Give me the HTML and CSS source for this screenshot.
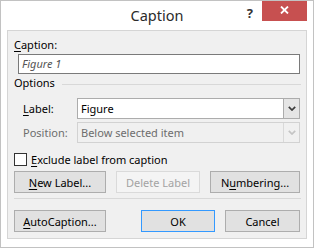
FILE: index.html
```html
<!DOCTYPE html>
<html lang="en">
<head>
  <meta charset="UTF-8">
  <title>Caption</title>
  <link rel="stylesheet" href="styles.css">
</head>
<body>
  <div class="window">
    <div class="titlebar">
      <span class="title">Caption</span>
      <span class="help">?</span>
      <span class="close">
        <svg width="9" height="8" viewBox="0 0 9 8">
          <path d="M1 0.5 L8 7.5 M8 0.5 L1 7.5" stroke="#fff" stroke-width="1.8" fill="none"/>
        </svg>
      </span>
    </div>
    <div class="client">
      <div class="caption-label"><u>C</u>aption:</div>
      <div class="textbox">Figure 1</div>
      <div class="group-title"><span>Options</span><span class="rule"></span></div>
      <div class="field">
        <span class="field-label"><u>L</u>abel:</span>
        <div class="combo">
          <span class="combo-text">Figure</span>
          <span class="combo-btn">
            <svg width="8" height="5" viewBox="0 0 8 5">
              <path d="M0.8 0.8 L4 4 L7.2 0.8" stroke="#3c3c3c" stroke-width="1.7" fill="none"/>
            </svg>
          </span>
        </div>
      </div>
      <div class="field disabled">
        <span class="field-label">Position:</span>
        <div class="combo">
          <span class="combo-text">Below selected item</span>
          <span class="combo-btn">
            <svg width="8" height="5" viewBox="0 0 8 5">
              <path d="M0.8 0.8 L4 4 L7.2 0.8" stroke="#c4c4c4" stroke-width="1.7" fill="none"/>
            </svg>
          </span>
        </div>
      </div>
      <label class="check">
        <span class="box"></span>
        <span><u>E</u>xclude label from caption</span>
      </label>
      <div class="buttons">
        <span class="btn wide"><u>N</u>ew Label...</span>
        <span class="btn mid off">Delete Label</span>
        <span class="btn last">N<u>u</u>mbering...</span>
      </div>
      <div class="separator"></div>
      <div class="buttons bottom">
        <span class="btn wide"><u>A</u>utoCaption...</span>
        <span class="btn small default">OK</span>
        <span class="btn small">Cancel</span>
      </div>
    </div>
  </div>
</body>
</html>
```

FILE: styles.css
```css
body {
  margin: 0;
  font-family: 'Noto Sans', sans-serif;
  font-size: 11px;
  color: #000;
}
u {
  text-decoration-thickness: 1px;
  text-underline-offset: 2px;
}
.window {
  width: 314px;
  height: 248px;
  box-sizing: border-box;
  border: 1px solid #c2c2c2;
  background: #fff;
  padding: 0 6px;
}
.titlebar {
  height: 29px;
  display: flex;
  align-items: flex-start;
  position: relative;
}
.title {
  position: absolute;
  left: 0;
  right: 0;
  top: 4px;
  text-align: center;
  font-size: 14.5px;
  color: #2b2b2b;
}
.help {
  margin-left: auto;
  margin-top: 3px;
  margin-right: 9px;
  font-weight: bold;
  font-size: 13px;
  color: #333;
  position: relative;
}
.close {
  width: 45px;
  height: 20px;
  background: #c75050;
  display: flex;
  align-items: center;
  justify-content: center;
  position: relative;
}
.close svg {
  margin-top: -2px;
}

/* the grey client area */
.client {
  background: #f0f0f0;
  border: 1px solid #d5d5d5;
  padding: 7px 6px 6px 6px;
  display: flex;
  flex-direction: column;
}
.caption-label {
  height: 14px;
  line-height: 14px;
  margin-bottom: 2px;
}
.textbox {
  margin-left: 4px;
  height: 20px;
  box-sizing: border-box;
  border: 1px solid #7a7a7a;
  background: #fff;
  font-style: italic;
  color: #555;
  padding-left: 3px;
  line-height: 17px;
}
.group-title {
  margin-top: 2px;
  height: 14px;
  line-height: 14px;
  display: flex;
  align-items: center;
}
.rule {
  flex: 1;
  border-top: 1px solid #d8d8d8;
  margin-left: 7px;
  margin-right: -1px;
  margin-top: 2px;
}
.field {
  display: flex;
  align-items: center;
  margin-top: 8px;
  height: 21px;
}
.field + .field {
  margin-top: 3px;
}
.field-label {
  width: 54px;
  padding-left: 9px;
}
.combo {
  flex: 1;
  height: 21px;
  box-sizing: border-box;
  border: 1px solid #acacac;
  background: #fff;
  display: flex;
  align-items: center;
}
.combo-text {
  flex: 1;
  padding-left: 3px;
}
.combo-btn {
  width: 16px;
  height: 19px;
  box-sizing: border-box;
  border-left: 1px solid #acacac;
  background: #e5e5e5;
  display: flex;
  align-items: center;
  justify-content: center;
}
.disabled {
  color: #6d6d6d;
}
.disabled .combo {
  background: #f0f0f0;
  border-color: #d2d2d2;
}
.disabled .combo-btn {
  background: #f0f0f0;
  border-left-color: #d9d9d9;
}
.check {
  display: flex;
  align-items: center;
  margin-top: 10px;
  height: 13px;
}
.box {
  width: 13px;
  height: 13px;
  box-sizing: border-box;
  border: 1px solid #333;
  background: #fff;
  margin-right: 4px;
}
.buttons {
  display: flex;
  margin-top: 5px;
  gap: 10px;
}
.btn {
  height: 22px;
  box-sizing: border-box;
  border: 1px solid #adadad;
  background: #e1e1e1;
  display: flex;
  align-items: center;
  justify-content: center;
}
.wide { width: 92px; }
.mid { width: 84px; }
.last { flex: 1; }
.small { width: 74px; }
.off {
  color: #a3a3a3;
  background: #f4f4f4;
  border-color: #dadada;
}
.default {
  border-color: #3399ff;
  margin-left: 25px;
}
.bottom .small:last-child { flex: 1; }
.separator {
  margin-top: 5px;
  border-top: 1px solid #d8d8d8;
  margin-right: -1px;
}
.bottom {
  margin-top: 11px;
}
```
